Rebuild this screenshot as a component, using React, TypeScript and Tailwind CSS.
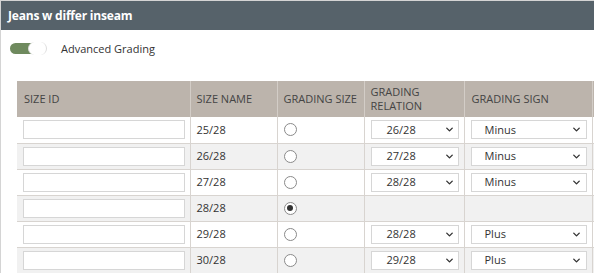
import { ChevronDown } from 'lucide-react'

type Row = {
  name: string
  relation?: string
  sign?: string
  selected?: boolean
}

const rows: Row[] = [
  { name: '25/28', relation: '26/28', sign: 'Minus' },
  { name: '26/28', relation: '27/28', sign: 'Minus' },
  { name: '27/28', relation: '28/28', sign: 'Minus' },
  { name: '28/28', selected: true },
  { name: '29/28', relation: '28/28', sign: 'Plus' },
  { name: '30/28', relation: '29/28', sign: 'Plus' },
]

const FakeSelect = ({ value, className }: { value: string; className: string }) => (
  <div
    className={`${className} h-[19px] flex items-center justify-between bg-white border border-[#d6d6d6] text-[11px] text-[#333]`}
  >
    <span>{value}</span>
    <ChevronDown className="w-[11px] h-[11px] text-[#333]" strokeWidth={3} />
  </div>
)

const Radio = ({ checked }: { checked?: boolean }) => (
  <span className="w-[13px] h-[13px] rounded-full border border-[#8a8a8a] bg-white flex items-center justify-center">
    {checked && <span className="w-[6px] h-[6px] rounded-full bg-[#333]" />}
  </span>
)

export default function App() {
  return (
    <div className="w-[594px] h-[273px] overflow-hidden bg-white font-['Open_Sans',sans-serif] border-l border-t border-[#d4d4d4]">
      <div className="h-[29px] bg-[#56626a] flex items-center pl-[7px]">
        <span className="text-white text-[12px] font-bold tracking-[-0.2px]">Jeans w differ inseam</span>
      </div>

      <div className="flex items-center pl-[9px] pt-[3px] h-[35px]">
        <div className="relative w-[37px] h-[14px]">
          <div className="absolute left-0 top-[1px] w-[22px] h-[11px] rounded-l-full bg-[#6f8a5e]" />
          <div className="absolute left-[18px] top-0 w-[19px] h-[13px] rounded-full bg-white border-x border-[#dcdcdc]" />
        </div>
        <span className="ml-[14px] text-[11px] text-[#333]">Advanced Grading</span>
      </div>

      <div className="pl-[16px] pt-[16px]">
        <table className="table-fixed border-collapse w-[700px] text-left">
          <colgroup>
            <col className="w-[173px]" />
            <col className="w-[87px]" />
            <col className="w-[87px]" />
            <col className="w-[100px]" />
            <col className="w-[128px]" />
            <col className="w-[125px]" />
          </colgroup>
          <thead>
            <tr className="bg-[#bcb4ac] h-[36px]">
              <th className="font-normal text-[11px] leading-[14px] text-[#444] pl-[7px] border-r border-[#d3cdc7]">SIZE ID</th>
              <th className="font-normal text-[11px] leading-[14px] text-[#444] pl-[6px] border-r border-[#d3cdc7]">SIZE NAME</th>
              <th className="font-normal text-[11px] leading-[14px] text-[#444] pl-[6px] border-r border-[#d3cdc7]">GRADING SIZE</th>
              <th className="font-normal text-[11px] leading-[14px] text-[#444] pl-[6px] border-r border-[#d3cdc7]">
                GRADING
                <br />
                RELATION
              </th>
              <th className="font-normal text-[11px] leading-[14px] text-[#444] pl-[7px] border-r border-[#d3cdc7]">GRADING SIGN</th>
              <th className="border-r border-[#d3cdc7]"></th>
            </tr>
          </thead>
          <tbody>
            {rows.map((r, i) => (
              <tr key={r.name} className={`h-[26px] border-b border-[#d8d4d0] ${i % 2 === 1 ? 'bg-[#f1f1f1]' : 'bg-white'}`}>
                <td className="border-r border-[#d8d4d0] pl-[6px]">
                  <div className="w-[162px] h-[19px] bg-white border border-[#d6d6d6]" />
                </td>
                <td className="border-r border-[#d8d4d0] pl-[6px] text-[11px] text-[#333]">{r.name}</td>
                <td className="border-r border-[#d8d4d0] pl-[6px]">
                  <Radio checked={r.selected} />
                </td>
                <td className="border-r border-[#d8d4d0] pl-[6px]">
                  {r.relation && <FakeSelect value={r.relation} className="w-[88px] pl-[15px] pr-[3px]" />}
                </td>
                <td className="border-r border-[#d8d4d0] pl-[6px]">
                  {r.sign && <FakeSelect value={r.sign} className="w-[116px] pl-[13px] pr-[4px]" />}
                </td>
                <td className="border-r border-[#d8d4d0] pl-[6px]">
                  {r.sign && <div className="w-[110px] h-[19px] bg-white border border-[#d6d6d6]" />}
                </td>
              </tr>
            ))}
          </tbody>
        </table>
      </div>
    </div>
  )
}
